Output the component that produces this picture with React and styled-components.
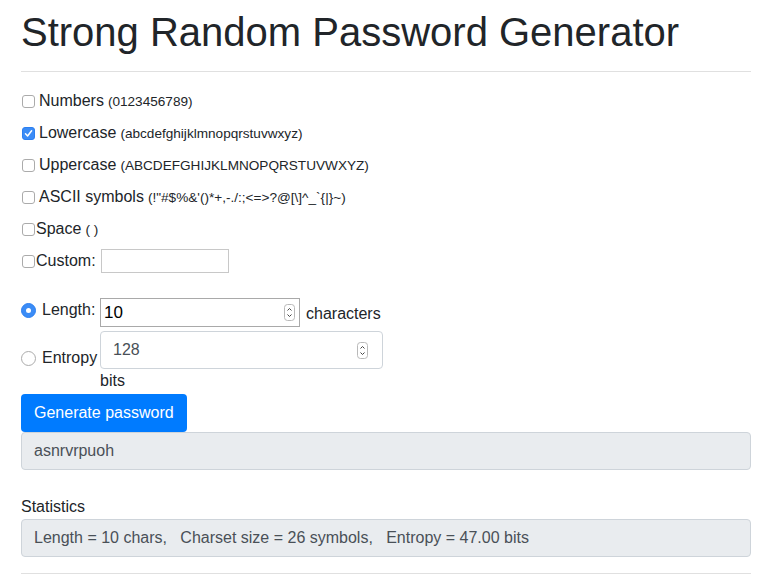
import { useState } from 'react';
import styled, { createGlobalStyle } from 'styled-components';

const GlobalStyle = createGlobalStyle`
    body {
        margin: 0;
        background: #fff;
        color: #212529;
        font-family: "Liberation Sans", Arial, sans-serif;
        font-size: 16px;
    }
`;

const Page = styled.div`
    padding: 8px 24px 0 21px;
    width: 730px;
`;

const Title = styled.h1`
    margin: 0 0 15px;
    font-size: 40px;
    font-weight: 400;
    line-height: 48px;
`;

const Rule = styled.hr`
    margin: 0 0 17px;
    border: 0;
    border-top: 1px solid #e0e0e0;
`;

const OptionList = styled.div`
    display: flex;
    flex-direction: column;
    gap: 8px;
`;

const OptionRow = styled.label`
    display: flex;
    align-items: center;
    height: 24px;
    gap: ${p => (p.tight ? '0' : '3px')};
`;

const Box = styled.span`
    box-sizing: border-box;
    width: 13px;
    height: 13px;
    margin: 0 1px;
    border-radius: 3px;
    border: 1px solid ${p => (p.checked ? '#2b7ff1' : '#ababab')};
    background: ${p => (p.checked ? '#3b8cf6' : '#fff')};
    display: flex;
    align-items: center;
    justify-content: center;
    flex: none;
`;

const Small = styled.small`
    font-size: 13.6px;
    margin-left: 4px;
`;

const CustomInput = styled.input`
    box-sizing: border-box;
    width: 128px;
    height: 24px;
    margin-left: 5px;
    border: 1px solid #c8c8c8;
    font: inherit;
    padding: 1px 4px;
    outline: none;
`;

const ModeList = styled.div`
    margin-top: 25px;
    display: flex;
    flex-direction: column;
    gap: 4px;
`;

const ModeRow = styled.div`
    display: flex;
    align-items: ${p => (p.bottom ? 'flex-end' : 'flex-start')};
`;

const ModeLabel = styled.label`
    display: flex;
    align-items: center;
    height: ${p => (p.low ? '22px' : '24px')};
    width: 79px;
    gap: 6px;
`;

const Radio = styled.span`
    box-sizing: border-box;
    width: 15px;
    height: 15px;
    border-radius: 50%;
    flex: none;
    display: flex;
    align-items: center;
    justify-content: center;
    border: 1px solid ${p => (p.checked ? '#2b7ff1' : '#ababab')};
    background: ${p => (p.checked ? '#3b8cf6' : '#fff')};
    &::after {
        content: '';
        width: 5px;
        height: 5px;
        border-radius: 50%;
        background: ${p => (p.checked ? '#fff' : 'transparent')};
    }
`;

const NumberField = styled.div`
    box-sizing: border-box;
    display: flex;
    align-items: center;
    width: ${p => p.width}px;
    height: ${p => p.height}px;
    padding: ${p => (p.bootstrap ? '0 14px 0 12px' : '0 4px 0 3px')};
    border: 1px solid ${p => (p.bootstrap ? '#ced4da' : '#a9a9a9')};
    border-radius: ${p => (p.bootstrap ? '4px' : '0')};
    color: ${p => (p.bootstrap ? '#495057' : '#000')};
    background: #fff;
`;

const NumberInput = styled.input`
    flex: 1;
    min-width: 0;
    border: 0;
    outline: none;
    padding: 0;
    font: inherit;
    font-size: ${p => (p.big ? '17px' : '16px')};
    color: inherit;
    background: transparent;
`;

const Suffix = styled.span`
    margin-left: 6px;
    padding-top: 2px;
    line-height: 27px;
`;

const Unit = styled.span`
    line-height: 24px;
    margin-left: 79px;
`;

const Button = styled.button`
    margin-top: 1px;
    align-self: flex-start;
    height: 38px;
    padding: 0 13px;
    border: 0;
    border-radius: 4px;
    background: #007bff;
    color: #fff;
    font: inherit;
    font-size: 16px;
    cursor: pointer;
`;

const ReadOnlyBox = styled.div`
    box-sizing: border-box;
    height: 38px;
    display: flex;
    align-items: center;
    padding: 0 12px;
    background: #e9ecef;
    border: 1px solid #ced4da;
    border-radius: 4px;
    color: #495057;
    white-space: pre;
`;

const SectionLabel = styled.div`
    margin-top: 25px;
    line-height: 24px;
`;

const Bottom = styled.hr`
    margin: 16px 0 0;
    border: 0;
    border-top: 1px solid #e0e0e0;
`;

const Column = styled.div`
    display: flex;
    flex-direction: column;
`;

const Spinner = () => (
    <svg width="11" height="17" viewBox="0 0 11 17">
        <rect x="0.5" y="0.5" width="10" height="16" rx="3" fill="#fff" stroke="#b9b9b9" />
        <path d="M3.5 6.5 L5.5 4.5 L7.5 6.5 M3.5 10.5 L5.5 12.5 L7.5 10.5" fill="none" stroke="#444" strokeWidth="1" />
    </svg>
);

const Check = () => (
    <svg width="9" height="9" viewBox="0 0 9 9">
        <path d="M1.5 4.8 L3.6 7 L7.6 1.8" fill="none" stroke="#fff" strokeWidth="1.5" strokeLinecap="round" strokeLinejoin="round" />
    </svg>
);

const charsets = [
    { name: 'Numbers', chars: '(0123456789)', checked: false },
    { name: 'Lowercase', chars: '(abcdefghijklmnopqrstuvwxyz)', checked: true },
    { name: 'Uppercase', chars: '(ABCDEFGHIJKLMNOPQRSTUVWXYZ)', checked: false },
    { name: 'ASCII symbols', chars: '(!"#$%&\'()*+,-./:;<=>?@[\\]^_`{|}~)', checked: false },
    { name: 'Space', chars: '( )', checked: false, tight: true },
];

const App = () => {
    const [length, setLength] = useState('10');
    const [entropy, setEntropy] = useState('128');

    return (
        <Page>
            <GlobalStyle />
            <Title>Strong Random Password Generator</Title>
            <Rule />
            <OptionList>
                {charsets.map(c => (
                    <OptionRow key={c.name} tight={c.tight}>
                        <Box checked={c.checked}>{c.checked && <Check />}</Box>
                        <span>{c.name}<Small>{c.chars}</Small></span>
                    </OptionRow>
                ))}
                <OptionRow tight>
                    <Box />
                    <span>Custom:</span>
                    <CustomInput />
                </OptionRow>
            </OptionList>
            <ModeList>
                <ModeRow>
                    <ModeLabel>
                        <Radio checked />
                        <span>Length:</span>
                    </ModeLabel>
                    <NumberField width={200} height={29}>
                        <NumberInput big value={length} onChange={e => setLength(e.target.value)} />
                        <Spinner />
                    </NumberField>
                    <Suffix>characters</Suffix>
                </ModeRow>
                <ModeRow bottom>
                    <ModeLabel low>
                        <Radio />
                        <span>Entropy</span>
                    </ModeLabel>
                    <NumberField bootstrap width={283} height={38}>
                        <NumberInput value={entropy} onChange={e => setEntropy(e.target.value)} />
                        <Spinner />
                    </NumberField>
                </ModeRow>
            </ModeList>
            <Column>
                <Unit>bits</Unit>
                <Button>Generate password</Button>
                <ReadOnlyBox>asnrvrpuoh</ReadOnlyBox>
                <SectionLabel>Statistics</SectionLabel>
                <ReadOnlyBox>Length = 10 chars,   Charset size = 26 symbols,   Entropy = 47.00 bits</ReadOnlyBox>
            </Column>
            <Bottom />
        </Page>
    );
};

export default App;
